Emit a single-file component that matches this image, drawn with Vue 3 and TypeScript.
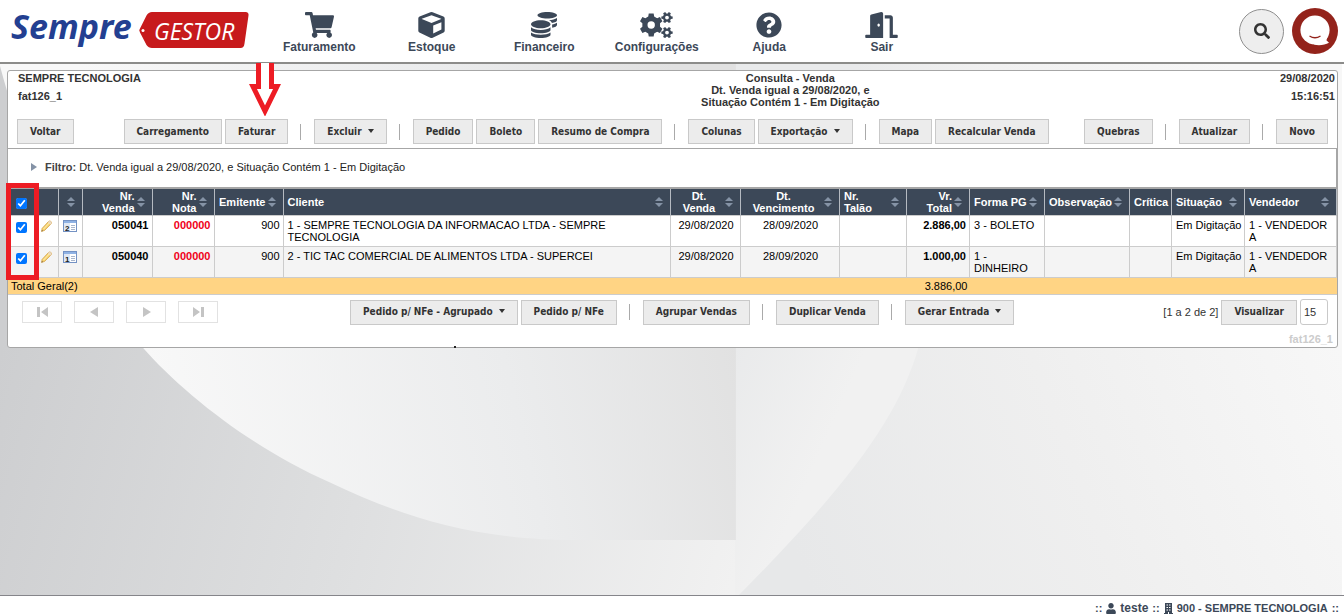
<script setup lang="ts">
import { ref } from 'vue'

interface Tool { label?: string; menu?: boolean; sep?: boolean }
interface Column { key: string; lines: string[]; align: string; sort: boolean }
interface Sale {
  id: number; checked: boolean; venda: string; nota: string; emitente: string; cliente: string
  data: string; vencimento: string; total: string; forma: string; situacao: string; vendedor: string
}

const sep: Tool = { sep: true }

const mainTools: Tool[] = [
  { label: 'Carregamento' }, { label: 'Faturar' }, sep,
  { label: 'Excluir', menu: true }, sep,
  { label: 'Pedido' }, { label: 'Boleto' }, { label: 'Resumo de Compra' }, sep,
  { label: 'Colunas' }, { label: 'Exportação', menu: true }, sep,
  { label: 'Mapa' }, { label: 'Recalcular Venda' },
]
const endTools: Tool[] = [{ label: 'Quebras' }, sep, { label: 'Atualizar' }, sep, { label: 'Novo' }]
const footTools: Tool[] = [
  { label: 'Pedido p/ NFe - Agrupado', menu: true }, { label: 'Pedido p/ NFe' }, sep,
  { label: 'Agrupar Vendas' }, sep, { label: 'Duplicar Venda' }, sep,
  { label: 'Gerar Entrada', menu: true },
]

const columns: Column[] = [
  { key: 'venda', lines: ['Nr.', 'Venda'], align: 'right', sort: true },
  { key: 'nota', lines: ['Nr.', 'Nota'], align: 'right', sort: true },
  { key: 'emitente', lines: ['Emitente'], align: 'right', sort: true },
  { key: 'cliente', lines: ['Cliente'], align: 'left', sort: true },
  { key: 'data', lines: ['Dt.', 'Venda'], align: 'center', sort: true },
  { key: 'venc', lines: ['Dt.', 'Vencimento'], align: 'center', sort: true },
  { key: 'talao', lines: ['Nr.', 'Talão'], align: 'left', sort: true },
  { key: 'total', lines: ['Vr.', 'Total'], align: 'right', sort: true },
  { key: 'forma', lines: ['Forma PG'], align: 'left', sort: true },
  { key: 'obs', lines: ['Observação'], align: 'left', sort: true },
  { key: 'critica', lines: ['Crítica'], align: 'left', sort: false },
  { key: 'situacao', lines: ['Situação'], align: 'left', sort: true },
  { key: 'vendedor', lines: ['Vendedor'], align: 'left', sort: true },
]

const allChecked = ref(true)
const pageSize = ref('15')
const sales = ref<Sale[]>([
  { id: 2, checked: true, venda: '050041', nota: '000000', emitente: '900', cliente: '1 - SEMPRE TECNOLOGIA DA INFORMACAO LTDA - SEMPRE TECNOLOGIA', data: '29/08/2020', vencimento: '28/09/2020', total: '2.886,00', forma: '3 - BOLETO', situacao: 'Em Digitação', vendedor: '1 - VENDEDOR A' },
  { id: 1, checked: true, venda: '050040', nota: '000000', emitente: '900', cliente: '2 - TIC TAC COMERCIAL DE ALIMENTOS LTDA - SUPERCEI', data: '29/08/2020', vencimento: '28/09/2020', total: '1.000,00', forma: '1 - DINHEIRO', situacao: 'Em Digitação', vendedor: '1 - VENDEDOR A' },
])

function toggleAll() {
  sales.value.forEach((s) => { s.checked = allChecked.value })
}

/* Outline of a six-toothed wheel with a round hole, in icon units */
function gear(cx: number, cy: number, outer: number, inner: number, hole: number, turn: number): string {
  const pts: string[] = []
  const step = Math.PI / 3
  for (let i = 0; i < 6; i++) {
    const a = (i + turn) * step
    const corners: [number, number][] = [[-0.32, inner], [-0.2, outer], [0.2, outer], [0.32, inner]]
    for (const [k, r] of corners) {
      pts.push(`${(cx + Math.cos(a + k * step) * r).toFixed(2)} ${(cy + Math.sin(a + k * step) * r).toFixed(2)}`)
    }
  }
  return `M${pts.join('L')}ZM${cx - hole} ${cy}a${hole} ${hole} 0 1 0 ${hole * 2} 0a${hole} ${hole} 0 1 0 ${-hole * 2} 0Z`
}

const nav = [
  { label: 'Faturamento', box: '0 0 576 512', w: 29, d: 'M528.12 301.319l47.273-208C578.806 78.301 567.391 64 551.99 64H159.208l-9.166-44.81C147.758 8.021 137.93 0 126.529 0H24C10.745 0 0 10.745 0 24v16c0 13.255 10.745 24 24 24h69.883l70.248 343.435C147.325 417.1 136 435.222 136 456c0 30.928 25.072 56 56 56s56-25.072 56-56c0-15.674-6.447-29.835-16.824-40h209.647C430.447 426.165 424 440.326 424 456c0 30.928 25.072 56 56 56s56-25.072 56-56c0-22.172-12.888-41.332-31.579-50.405l5.517-24.276c3.413-15.018-8.002-29.319-23.403-29.319H218.117l-6.545-32h293.145c11.206 0 20.92-7.754 23.403-18.681z' },
  { label: 'Estoque', box: '0 0 27 26', w: 27, d: 'M12.4.3Q13.5-.1 14.6.3L25.4 4.400Q26.700 5 26.700 6.400V18.800Q26.700 20 25.600 20.600L14.700 25.800Q13.500 26.300 12.300 25.800L1.400 20.600Q.3 20 .3 18.800V6.400Q.3 5 1.600 4.400ZM13.500 3.300L3.800 6.800V7L13.500 10.900L23.200 7V6.800ZM15.200 13.600V21.400L23.400 17.400V10.300Z' },
  { label: 'Financeiro', box: '0 0 512 512', w: 26, d: 'M0 405.3V448c0 35.3 86 64 192 64s192-28.7 192-64v-42.7C342.7 434.4 267.2 448 192 448S41.3 434.4 0 405.3zM320 128c106 0 192-28.7 192-64S426 0 320 0 128 28.7 128 64s86 64 192 64zM0 300.4V352c0 35.3 86 64 192 64s192-28.7 192-64v-51.6c-41.3 34-116.9 51.6-192 51.600S41.3 334.400 0 300.400zm416 11c57.3-11.1 96-31.7 96-55.400v-42.700c-23.200 16.400-57.300 27.600-96 34.500v63.600zM192 160C86 160 0 195.800 0 240s86 80 192 80 192-35.800 192-80-86-80-192-80zm219.300 56.300c60-10.800 100.700-32 100.700-56.300v-42.700c-35.500 25.100-96.500 38.600-160.700 41.800 29.500 14.300 51.200 33.500 60 57.200z' },
  { label: 'Configurações', box: '0 0 33 26', w: 33, d: gear(11.2, 13, 11.8, 9, 3.7, 0.5) + gear(27, 5.6, 5.8, 4.2, 1.9, 0) + gear(27, 20.6, 5.8, 4.2, 1.9, 0) },
  { label: 'Ajuda', box: '0 0 512 512', w: 26, d: 'M504 256c0 136.997-111.043 248-248 248S8 392.997 8 256C8 119.083 119.043 8 256 8s248 111.083 248 248zM262.655 90c-54.497 0-89.255 22.957-116.549 63.758-3.536 5.286-2.353 12.415 2.715 16.258l34.699 26.310c5.205 3.947 12.621 3.008 16.665-2.122 17.864-22.658 30.113-35.797 57.303-35.797 20.429 0 45.698 13.148 45.698 32.958 0 14.976-12.363 22.667-32.534 33.976C247.128 238.528 216 254.941 216 296v4c0 6.627 5.373 12 12 12h56c6.627 0 12-5.373 12-12v-1.333c0-28.462 83.186-29.647 83.186-106.667 0-58.002-60.165-102-116.531-102zM256 338c-25.365 0-46 20.635-46 46 0 25.364 20.635 46 46 46s46-20.636 46-46c0-25.365-20.635-46-46-46z' },
  { label: 'Sair', box: '0 0 640 512', w: 33, d: 'M624 448h-80V113.450C544 86.190 522.470 64 496 64H384v64h96v384h144c8.840 0 16-7.160 16-16v-32c0-8.840-7.160-16-16-16zM312.240 1.010l-192 49.740C105.990 54.440 96 67.700 96 82.920V448H16c-8.840 0-16 7.160-16 16v32c0 8.840 7.160 16 16 16h336V33.180c0-21.580-19.560-37.410-39.760-32.170zM264 288c-13.250 0-24-14.330-24-32s10.750-32 24-32 24 14.330 24 32-10.750 32-24 32z' },
]

const pager = [
  { label: 'Primeira página', d: 'M0 0H3V10H0ZM11 0V10L4 5Z' },
  { label: 'Página anterior', d: 'M9 0V10L1 5Z' },
  { label: 'Próxima página', d: 'M2 0V10L10 5Z' },
  { label: 'Última página', d: 'M0 0V10L7 5ZM8 0H11V10H8Z' },
]
</script>

<template>
  <div class="page">
    <header class="topbar">
      <a href="#" class="logo" aria-label="Sempre Gestor">
        <svg width="242" height="56" viewBox="0 0 242 56">
          <path d="M129 25.500L135.500 12.500Q137.500 9 141 9H234.500Q238 9 237.500 12.500L233.500 40.500Q233 45 229.500 45H141Q137.500 45 135.500 42L129 29.500Q127.500 27 129 25.500Z" fill="#c71a1c" />
          <circle cx="132" cy="27.500" r="1.500" fill="#fff" />
          <text x="0" y="36" class="brand">Sempre</text>
          <text x="143" y="37" class="product">GESTOR</text>
        </svg>
      </a>
      <nav class="menu">
        <a v-for="n in nav" :key="n.label" href="#" class="menu-item">
          <svg :width="n.w" height="26" :viewBox="n.box"><path :d="n.d" fill-rule="evenodd" /></svg>
          <span>{{ n.label }}</span>
        </a>
      </nav>
      <div class="actions">
        <button class="search" aria-label="Pesquisar">
          <svg width="16" height="16" viewBox="0 0 512 512"><path d="M505 442.700L405.300 343c-4.500-4.500-10.600-7-17-7H372c27.600-35.300 44-79.700 44-128C416 93.100 322.900 0 208 0S0 93.100 0 208s93.100 208 208 208c48.300 0 92.700-16.400 128-44v16.300c0 6.400 2.500 12.500 7 17l99.700 99.700c9.400 9.400 24.600 9.400 33.900 0l28.300-28.300c9.400-9.400 9.400-24.600.1-34zM208 336c-70.700 0-128-57.200-128-128 0-70.700 57.200-128 128-128 70.700 0 128 57.200 128 128 0 70.700-57.200 128-128 128z" /></svg>
        </button>
        <button class="chat" aria-label="Atendimento">
          <svg width="46" height="46" viewBox="0 0 46 46">
            <circle cx="23" cy="23" r="23" fill="#93231b" />
            <circle cx="23" cy="22" r="14.600" fill="#fff" />
            <path d="M22 36.600C27 38 33 37 37 34.800L34.400 32.300L35.500 29L28 30Z" fill="#fff" />
            <path d="M17.500 28Q23 31.500 28.500 28" fill="none" stroke="#93231b" stroke-width="1.300" />
          </svg>
        </button>
      </div>
    </header>

    <main class="content">
      <svg class="backdrop" viewBox="0 64 1344 532" preserveAspectRatio="none" aria-hidden="true">
        <defs>
          <linearGradient id="base" gradientUnits="userSpaceOnUse" x1="0" y1="350" x2="740" y2="560">
            <stop offset="0" stop-color="#cdced0" /><stop offset="0.500" stop-color="#dedfe0" /><stop offset="1" stop-color="#f1f1f1" />
          </linearGradient>
          <linearGradient id="disc" gradientUnits="userSpaceOnUse" x1="170" y1="460" x2="737" y2="330">
            <stop offset="0" stop-color="#f8f8f8" /><stop offset="0.600" stop-color="#ebeced" /><stop offset="1" stop-color="#e1e1e1" />
          </linearGradient>
          <linearGradient id="band" gradientUnits="userSpaceOnUse" x1="737" y1="340" x2="850" y2="390">
            <stop offset="0" stop-color="#e9eaeb" /><stop offset="1" stop-color="#f1f1f1" />
          </linearGradient>
          <linearGradient id="side" gradientUnits="userSpaceOnUse" x1="800" y1="560" x2="1344" y2="350">
            <stop offset="0" stop-color="#e7e8e9" /><stop offset="0.500" stop-color="#efefef" /><stop offset="1" stop-color="#f7f7f7" />
          </linearGradient>
        </defs>
        <rect y="64" width="1344" height="532" fill="url(#base)" />
        <path d="M736 64H994Q975 210 920 347C900 420 845 490 740 596H736Z" fill="url(#band)" />
        <path d="M994 64H1344V596H740C845 490 900 420 920 347Q975 210 994 64Z" fill="url(#side)" />
        <path d="M0 66C30 180 85 280 142 347C185 396 255 450 330 483C400 516 470 541 580 541H737V64H0Z" fill="url(#disc)" />
      </svg>

      <section class="panel">
        <div class="heading">
          <div class="heading-side"><span>SEMPRE TECNOLOGIA</span><span>fat126_1</span></div>
          <div class="heading-mid">Consulta - Venda<br>Dt. Venda igual a 29/08/2020, e<br>Situação Contém 1 - Em Digitação</div>
          <div class="heading-side end"><span>29/08/2020</span><span>15:16:51</span></div>
        </div>

        <div class="toolbar">
          <button class="btn">Voltar</button>
          <div class="tools main-tools">
            <template v-for="(t, i) in mainTools" :key="i">
              <span v-if="t.sep" class="sep"></span>
              <button v-else class="btn" :class="{ drop: t.menu }">{{ t.label }}</button>
            </template>
          </div>
          <div class="tools end-tools">
            <template v-for="(t, i) in endTools" :key="i">
              <span v-if="t.sep" class="sep"></span>
              <button v-else class="btn">{{ t.label }}</button>
            </template>
          </div>
        </div>

        <div class="filter">
          <svg width="6" height="8" viewBox="0 0 6 8"><path d="M0 0L6 4L0 8Z" fill="#8492a6" /></svg>
          <span class="filter-text"><b>Filtro:</b> Dt. Venda igual a 29/08/2020, e Situação Contém 1 - Em Digitação</span>
        </div>

        <div class="grid-wrap">
          <table class="grid">
            <colgroup>
              <col class="c-check"><col class="c-edit"><col class="c-count">
              <col v-for="c in columns" :key="c.key" :class="'c-' + c.key">
            </colgroup>
            <thead>
              <tr>
                <th class="check"><input v-model="allChecked" type="checkbox" aria-label="Selecionar todas as vendas" @change="toggleAll"></th>
                <th></th>
                <th><div class="th only-icon"><svg width="8" height="10" viewBox="0 0 8 10"><path d="M4 0L8 4H0ZM0 6H8L4 10Z" /></svg></div></th>
                <th v-for="c in columns" :key="c.key">
                  <div class="th" :class="c.align">
                    <span class="th-text"><template v-for="(l, i) in c.lines" :key="l"><br v-if="i">{{ l }}</template></span>
                    <svg v-if="c.sort" width="8" height="10" viewBox="0 0 8 10"><path d="M4 0L8 4H0ZM0 6H8L4 10Z" /></svg>
                  </div>
                </th>
              </tr>
            </thead>
            <tbody>
              <tr v-for="s in sales" :key="s.id">
                <td class="check"><input v-model="s.checked" type="checkbox" :aria-label="'Selecionar venda ' + s.venda"></td>
                <td class="icon">
                  <svg width="11" height="12" viewBox="0 0 11 12">
                    <path d="M1.200 8.300L7.500 1.500Q8.800.4 10 1.500Q11 2.700 10 3.900L3.600 10.400L.5 11.400Z" fill="#f6d270" stroke="#d3a24a" stroke-width="0.800" />
                    <path d="M7.500 1.500Q8.800.4 10 1.500Q11 2.700 10 3.900L9.300 4.500L6.900 2.200Z" fill="#ead9c6" />
                    <path d="M2.600 9L8.400 2.800" stroke="#fff0b5" stroke-width="1" />
                    <path d="M.5 11.400L1 9.900L2 10.900Z" fill="#6b5a45" />
                  </svg>
                </td>
                <td class="icon">
                  <svg width="14" height="12" viewBox="0 0 14 12">
                    <rect x="0.500" y="0.500" width="13" height="11" fill="#fff" stroke="#7492c4" />
                    <rect x="1" y="1" width="12" height="2" fill="#8fb2e4" />
                    <rect x="1" y="3" width="6" height="8" fill="#dfe8f5" />
                    <path d="M8 5.500H12M8 7.500H12M8 9.500H12" stroke="#a9b6cc" stroke-width="1" />
                    <text x="2" y="11" class="count">{{ s.id }}</text>
                  </svg>
                </td>
                <td class="right strong">{{ s.venda }}</td>
                <td class="right strong red">{{ s.nota }}</td>
                <td class="right">{{ s.emitente }}</td>
                <td>{{ s.cliente }}</td>
                <td class="center">{{ s.data }}</td>
                <td class="center">{{ s.vencimento }}</td>
                <td></td>
                <td class="right strong">{{ s.total }}</td>
                <td>{{ s.forma }}</td>
                <td></td>
                <td></td>
                <td class="nowrap">{{ s.situacao }}</td>
                <td>{{ s.vendedor }}</td>
              </tr>
            </tbody>
            <tfoot>
              <tr><td colspan="10">Total Geral(2)</td><td class="right">3.886,00</td><td colspan="5"></td></tr>
            </tfoot>
          </table>
          <span class="mark-box"></span>
        </div>

        <div class="pagebar">
          <div class="pager">
            <button v-for="p in pager" :key="p.label" disabled :aria-label="p.label">
              <svg width="11" height="10" viewBox="0 0 11 10"><path :d="p.d" /></svg>
            </button>
          </div>
          <div class="tools foot-tools">
            <template v-for="(t, i) in footTools" :key="i">
              <span v-if="t.sep" class="sep"></span>
              <button v-else class="btn" :class="{ drop: t.menu }">{{ t.label }}</button>
            </template>
          </div>
          <div class="view">
            <label for="page-size">[1 a 2 de 2]</label>
            <button class="btn">Visualizar</button>
            <input id="page-size" v-model="pageSize" type="text">
          </div>
        </div>
        <div class="code">fat126_1</div>
        <span class="speck"></span>
      </section>

      <svg class="mark-arrow" width="32" height="53" viewBox="0 0 32 53" aria-hidden="true">
        <path d="M9.500 0V23.500H4L16 48L28 23.500H22.500V0" fill="#fff" stroke="#ed1c24" stroke-width="5" />
      </svg>
    </main>

    <footer class="status">
      <span>::</span>
      <svg width="10" height="11" viewBox="0 0 448 512"><path d="M224 256c70.700 0 128-57.300 128-128S294.700 0 224 0 96 57.300 96 128s57.300 128 128 128zm89.600 32h-16.700c-22.200 10.200-46.900 16-72.900 16s-50.600-5.800-72.900-16h-16.700C60.200 288 0 348.200 0 422.400V464c0 26.500 21.500 48 48 48h352c26.500 0 48-21.500 48-48v-41.600c0-74.200-60.200-134.400-134.400-134.400z" /></svg>
      <span class="user">teste</span>
      <span>::</span>
      <svg width="9" height="11" viewBox="0 0 9 11"><path fill-rule="evenodd" d="M1 0H8V10H9V11H5V9H4V11H0V10H1ZM2.500 1.500V2.500H4V1.500ZM5 1.500V2.500H6.500V1.500ZM2.500 4V5H4V4ZM5 4V5H6.500V4ZM2.500 6.500V7.500H4V6.500ZM5 6.500V7.500H6.500V6.500Z" /></svg>
      <span>900 - SEMPRE TECNOLOGIA</span>
      <span>::</span>
    </footer>
  </div>
</template>

<style>
body { margin: 0; }
</style>

<style scoped>
.page {
  display: flex;
  flex-direction: column;
  min-height: 100vh;
  background: #fff;
  color: #333;
  font: 11px/12px "Liberation Sans", Arial, sans-serif;
}
.page *, .page *::after { box-sizing: border-box; }
button, input { font: inherit; }

.topbar {
  display: flex;
  align-items: center;
  height: 64px;
  padding: 0 6px 0 11px;
  border-bottom: 2px solid #8c8c8a;
}
.logo { display: flex; width: 252px; }
.logo svg { overflow: visible; }
.brand { font: italic 700 34px "Noto Sans", sans-serif; fill: #233f91; }
.product { font: italic 400 23px "Open Sans", sans-serif; fill: #fff; }
.menu { display: grid; grid-template-columns: repeat(6, 1fr); width: 675px; padding-top: 3px; }
.menu-item {
  display: flex;
  flex-direction: column;
  align-items: center;
  gap: 2px;
  color: #3c4858;
  font-size: 12px;
  font-weight: 700;
  line-height: 14px;
  text-decoration: none;
}
.menu-item svg { fill: #3c4858; }
.actions { display: flex; align-items: center; gap: 8px; margin-left: auto; }
.search {
  display: grid;
  place-items: center;
  width: 45px;
  height: 45px;
  padding: 0;
  border: 1px solid #8e8e8e;
  border-radius: 50%;
  background: #eee;
}
.search svg { fill: #333; }
.chat { display: flex; padding: 0; border: 0; background: none; }

.content { position: relative; flex: 1; padding: 6px 6px 0 7px; }
.backdrop { position: absolute; inset: 0; width: calc(100% - 2px); height: 100%; }

.panel {
  position: relative;
  border: 1px solid #a6a6a6;
  border-radius: 3px;
  background: #fff;
}
.heading {
  display: grid;
  grid-template-columns: 3fr auto 2fr;
  height: 48px;
  padding: 1px 2px 0 10px;
  font-weight: 700;
}
.heading-side { display: flex; flex-direction: column; gap: 6px; }
.heading-side.end { text-align: right; }
.heading-mid { text-align: center; }

.toolbar { display: flex; padding: 0 9px 4px; border-bottom: 1px solid #a6a6a6; }
.tools { display: flex; align-items: center; gap: 3px; }
.main-tools { margin-left: 50px; }
.end-tools { margin-left: auto; }
.btn {
  height: 25px;
  padding: 0 12px;
  border: 1px solid #c9c9c9;
  background: #ececec;
  color: #333;
  font: 700 10px/14px "DejaVu Sans Condensed", "DejaVu Sans", sans-serif;
  white-space: nowrap;
}
.drop::after {
  content: "";
  display: inline-block;
  margin-left: 6px;
  border: 3px solid transparent;
  border-top: 4px solid #333;
  border-bottom: 0;
  vertical-align: 2px;
}
.sep { width: 1px; height: 16px; margin: 0 10px 0 9px; background: #aaa; }

.filter {
  display: flex;
  align-items: center;
  gap: 8px;
  height: 38px;
  padding: 0 0 2px 23px;
  border-right: 1px solid #a6a6a6;
  color: #222;
}
.filter b { color: #444; }

.grid-wrap { position: relative; }
.grid {
  width: 100%;
  border-collapse: collapse;
  table-layout: fixed;
  border-top: 2px solid #a6a6a6;
  color: #000;
}
.c-check { width: 30px; }
.c-edit { width: 20px; }
.c-count { width: 24px; }
.c-venda { width: 70px; }
.c-nota { width: 62px; }
.c-emitente { width: 69px; }
.c-data { width: 70px; }
.c-venc { width: 99px; }
.c-talao { width: 67px; }
.c-total { width: 63px; }
.c-forma { width: 75px; }
.c-obs { width: 85px; }
.c-critica { width: 42px; }
.c-situacao { width: 73px; }
.c-vendedor { width: 92px; }
.grid th {
  height: 27px;
  padding: 1px 0;
  border-right: 1px solid #b5bac1;
  background: #3c4858;
  color: #fff;
}
.th { display: flex; align-items: center; gap: 2px; padding: 0 7px 0 4px; text-align: left; white-space: nowrap; }
.th svg { flex: none; fill: #8593a6; }
.th-text { flex: 1; }
.th.right, .right { text-align: right; }
.th.center, .center { text-align: center; }
.th.only-icon { padding-left: 8px; }
.grid tbody td {
  height: 31px;
  padding: 3px 3px 3px 4px;
  border: 1px solid #ccc;
  border-left: 0;
  vertical-align: top;
}
.grid tbody tr:nth-child(even) { background: #f4f4f4; }
.grid tfoot td {
  height: 17px;
  padding: 2px 2px 2px 3px;
  border-bottom: 1px solid #ccc;
  background: #ffd484;
}
.grid .check { padding: 0 2px 0 0; text-align: center; vertical-align: middle; }
.grid tbody .check { padding-top: 4px; vertical-align: top; }
.check input { width: 11px; height: 11px; margin: 1px 0 0; vertical-align: middle; }
.grid tbody .icon { padding: 4px 2px 0; }
.icon svg { display: block; }
.grid tbody .icon:nth-child(3) { padding-left: 4px; }
.count { font: 700 8px "Liberation Sans", Arial, sans-serif; fill: #222; }
.strong { font-weight: 700; }
.red { color: #f0001a; }
.nowrap { white-space: nowrap; }

.pagebar { display: flex; align-items: center; padding: 4px 9px 0 14px; }
.pager { display: flex; gap: 12px; }
.pager button {
  display: grid;
  place-items: center;
  width: 40px;
  height: 22px;
  padding: 0;
  border: 1px solid #e2e2e2;
  background: #fff;
}
.pager svg { fill: #c4c4c4; }
.foot-tools { margin-left: 132px; }
.view { display: flex; align-items: center; gap: 3px; margin-left: auto; }
.view input {
  width: 28px;
  height: 26px;
  padding: 0 3px;
  border: 1px solid #c9c9c9;
  border-radius: 3px;
  color: #333;
}
.code { padding: 8px 4px 2px; color: #ccc; font-weight: 700; text-align: right; }

.mark-box { position: absolute; top: -4px; left: -2px; width: 33px; height: 97px; border: 5px solid #ed1c24; }
.mark-arrow { position: absolute; top: -1px; left: 249px; }
.speck { position: absolute; bottom: -1px; left: 446px; width: 2px; height: 2px; background: #222; }

.status {
  display: flex;
  align-items: center;
  justify-content: flex-end;
  gap: 4px;
  height: 21px;
  padding: 4px 5px 0 0;
  border-top: 1px solid #85858a;
  color: #3c4858;
  font-weight: 700;
}
.status svg { fill: #3c4858; }
.user { font-size: 12px; }
</style>
